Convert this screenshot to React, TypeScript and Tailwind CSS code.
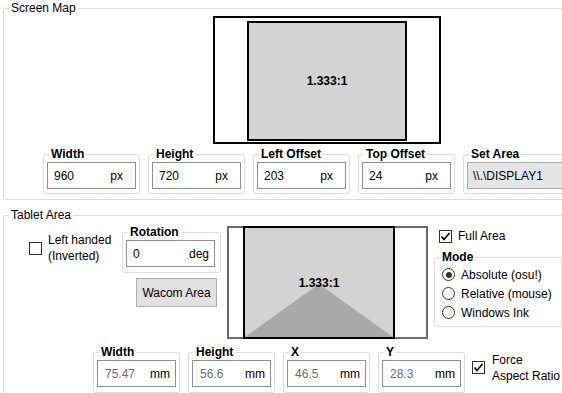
import type { ReactNode } from "react";

// --- small WinForms-like building blocks ---
function Group({
  title,
  bold = true,
  className = "",
  children,
}: {
  title: string;
  bold?: boolean;
  className?: string;
  children?: ReactNode;
}) {
  return (
    <div className={`relative shrink-0 rounded-[3px] border border-[#dcdcdc] ${className}`}>
      <span
        className={`absolute -top-[8px] left-[5px] bg-white px-[2px] leading-[14px] whitespace-nowrap ${
          bold ? "font-bold" : ""
        }`}
      >
        {title}
      </span>
      {children}
    </div>
  );
}

function Field({
  value,
  unit,
  muted = false,
  className = "",
}: {
  value: string;
  unit: string;
  muted?: boolean;
  className?: string;
}) {
  return (
    <div
      className={`flex h-[27px] items-center justify-between border border-[#8f8f8f] bg-white ${className}`}
    >
      <span className={muted ? "text-[#6d6d6d]" : "text-black"}>{value}</span>
      <span>{unit}</span>
    </div>
  );
}

function CheckBox({ checked = false }: { checked?: boolean }) {
  return (
    <div className="flex h-[13px] w-[13px] shrink-0 items-center justify-center border border-[#333333] bg-white">
      {checked && (
        <svg width="11" height="11" viewBox="0 0 11 11">
          <polyline
            points="1.5,5.5 4,8.5 9.5,2"
            fill="none"
            stroke="#000"
            strokeWidth="1.7"
          />
        </svg>
      )}
    </div>
  );
}

function Radio({ checked = false }: { checked?: boolean }) {
  return (
    <div className="flex h-[13px] w-[13px] shrink-0 items-center justify-center rounded-full border border-[#333333] bg-white">
      {checked && <div className="h-[6px] w-[6px] rounded-full bg-[#333333]" />}
    </div>
  );
}

const screenFields = [
  { title: "Width", value: "960" },
  { title: "Height", value: "720" },
  { title: "Left Offset", value: "203" },
  { title: "Top Offset", value: "24" },
];

const tabletFields = [
  { title: "Width", value: "75.47" },
  { title: "Height", value: "56.6" },
  { title: "X", value: "46.5" },
  { title: "Y", value: "28.3" },
];

const modes = ["Absolute (osu!)", "Relative (mouse)", "Windows Ink"];

export default function App() {
  return (
    <div className="h-[393px] w-[562px] overflow-hidden bg-white pl-[3px] pt-[8px] font-['Liberation_Sans',Arial,sans-serif] text-[12px] leading-[14px] text-black">
      {/* Screen Map */}
      <Group title="Screen Map" bold={false} className="h-[192px] w-[660px]">
        <div className="ml-[209px] mt-[7px] h-[128px] w-[228px] border-2 border-black bg-white">
          <div className="ml-[32px] mt-[3px] flex h-[120px] w-[160px] items-center justify-center border-2 border-black bg-[#d3d3d3] font-bold">
            1.333:1
          </div>
        </div>
        <div className="ml-[39px] mt-[10px] flex gap-[8px]">
          {screenFields.map((f) => (
            <Group key={f.title} title={f.title} className="h-[40px] w-[97px]">
              <Field
                value={f.value}
                unit="px"
                className="ml-[3px] mt-[7px] w-[89px] pl-[6px] pr-[12px]"
              />
            </Group>
          ))}
          <Group title="Set Area" className="h-[40px] w-[130px]">
            <div className="ml-[3px] mt-[7px] flex h-[27px] items-center border border-[#acacac] bg-[#e5e5e5] pl-[5px]">
              \\.\DISPLAY1
            </div>
          </Group>
        </div>
      </Group>

      {/* Tablet Area */}
      <Group title="Tablet Area" bold={false} className="mt-[15px] h-[200px] w-[660px]">
        <div className="flex items-start">
          <div className="w-[118px] shrink-0 pl-[25px] pt-[16px]">
            <div className="flex items-center gap-[6px]">
              <CheckBox />
              <div className="leading-[16px]">
                Left handed
                <br />
                (Inverted)
              </div>
            </div>
          </div>

          <div className="mt-[16px] w-[99px] shrink-0">
            <Group title="Rotation" className="h-[41px] w-[99px]">
              <Field
                value="0"
                unit="deg"
                className="ml-[3px] mt-[7px] w-[89px] pl-[6px] pr-[5px]"
              />
            </Group>
            <div className="ml-[14px] mt-[5px] flex h-[29px] w-[81px] items-center justify-center border border-[#adadad] bg-[#e1e1e1]">
              Wacom Area
            </div>
          </div>

          {/* tablet preview drawing */}
          <div className="ml-[6px] mt-[10px] flex h-[113px] w-[201px] shrink-0 border-2 border-[#6d6d6d] bg-white">
            <div className="relative -my-[2px] ml-[14px] flex h-[113px] w-[152px] items-center justify-center border-2 border-black bg-[#d3d3d3]">
              <svg
                className="absolute inset-0"
                width="148"
                height="109"
                viewBox="0 0 148 109"
              >
                <polygon points="0,109 74,56 148,109" fill="#a9a9a9" />
              </svg>
              <span className="relative font-bold">1.333:1</span>
            </div>
          </div>

          <div className="ml-[6px] shrink-0">
            <div className="ml-[5px] mt-[12px] flex items-center gap-[6px] leading-[16px]">
              <CheckBox checked />
              Full Area
            </div>
            <Group title="Mode" className="mt-[13px] h-[70px] w-[128px]">
              <div className="pl-[7px] pt-[7px]">
                {modes.map((m, i) => (
                  <div key={m} className="flex h-[19px] items-center gap-[6px] whitespace-nowrap">
                    <Radio checked={i === 0} />
                    {m}
                  </div>
                ))}
              </div>
            </Group>
          </div>
        </div>

        <div className="ml-[89px] mt-[13px] flex items-center gap-[8px]">
          {tabletFields.map((f) => (
            <Group key={f.title} title={f.title} className="h-[41px] w-[87px]">
              <Field
                value={f.value}
                unit="mm"
                muted
                className="ml-[3px] mt-[7px] w-[79px] pl-[7px] pr-[5px]"
              />
            </Group>
          ))}
          <div className="-mt-[10px] ml-[-1px] flex items-center gap-[7px] leading-[16px]">
            <CheckBox checked />
            <div>
              Force
              <br />
              Aspect Ratio
            </div>
          </div>
        </div>
      </Group>
    </div>
  );
}
